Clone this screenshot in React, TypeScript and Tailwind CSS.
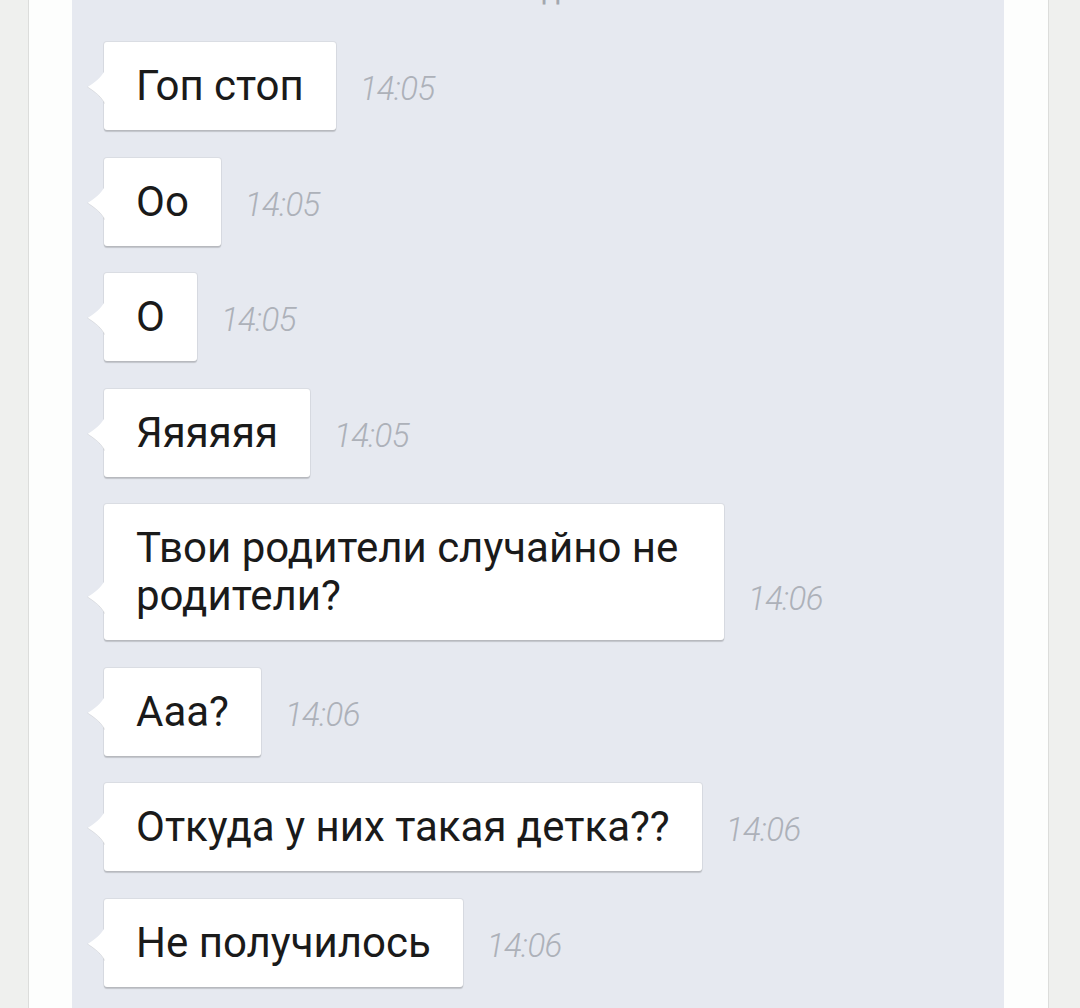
const MESSAGES = [
  { text: 'Гоп стоп', time: '14:05' },
  { text: 'Оо', time: '14:05' },
  { text: 'О', time: '14:05' },
  { text: 'Яяяяяя', time: '14:05' },
  { text: 'Твои родители случайно не родители?', time: '14:06' },
  { text: 'Ааа?', time: '14:06' },
  { text: 'Откуда у них такая детка??', time: '14:06' },
  { text: 'Не получилось', time: '14:06' },
]

function Tail() {
  return (
    <svg
      className="absolute -left-[17px] bottom-[26px]"
      width="18"
      height="34"
      viewBox="0 0 18 34"
    >
      <path d="M18 0 C15 7 7 13 0.5 17 C7 21 15 27 18 34 Z" fill="#ffffff" />
      <path d="M0.5 17 C7 21 15 27 18 34" fill="none" stroke="rgba(0,0,0,0.08)" strokeWidth="1" />
    </svg>
  )
}

function Bubble({ text, time }: { text: string; time: string }) {
  return (
    <div className="flex items-baseline-last gap-[24px]">
      <div className="relative bg-white rounded-[3px] px-8 py-5 max-w-[620px] shadow-[0_0_0_1px_rgba(0,0,0,0.05),0_1.5px_1px_rgba(0,0,0,0.16)]">
        <Tail />
        <p className="text-[42px] leading-[48px] text-[#1a1a1a]">{text}</p>
      </div>
      <span className="text-[33px] italic font-light text-[#adb1b9] tracking-[-0.6px]">{time}</span>
    </div>
  )
}

export default function App() {
  return (
    <div
      className="h-[1008px] overflow-hidden flex bg-[#eff0ee]"
      style={{ fontFamily: 'Roboto, "Noto Sans", sans-serif' }}
    >
      <div className="w-[29px] border-r border-[#dcdddb]" />
      <div className="w-[43px] bg-[#fdfefd]" />
      <div className="w-[932px] bg-[#e6e9f0] px-8 flex flex-col">
        <div className="-mt-[25px] h-[30px] mb-[37px] text-center text-[30px] leading-[30px] text-[#a3a7ae]">
          сегодня
        </div>
        <div className="flex flex-col gap-[27.5px]">
          {MESSAGES.map((m, i) => (
            <Bubble key={i} text={m.text} time={m.time} />
          ))}
        </div>
      </div>
      <div className="w-[45px] bg-[#fdfefd] border-r border-[#dcdddb]" />
      <div className="flex-1" />
    </div>
  )
}
